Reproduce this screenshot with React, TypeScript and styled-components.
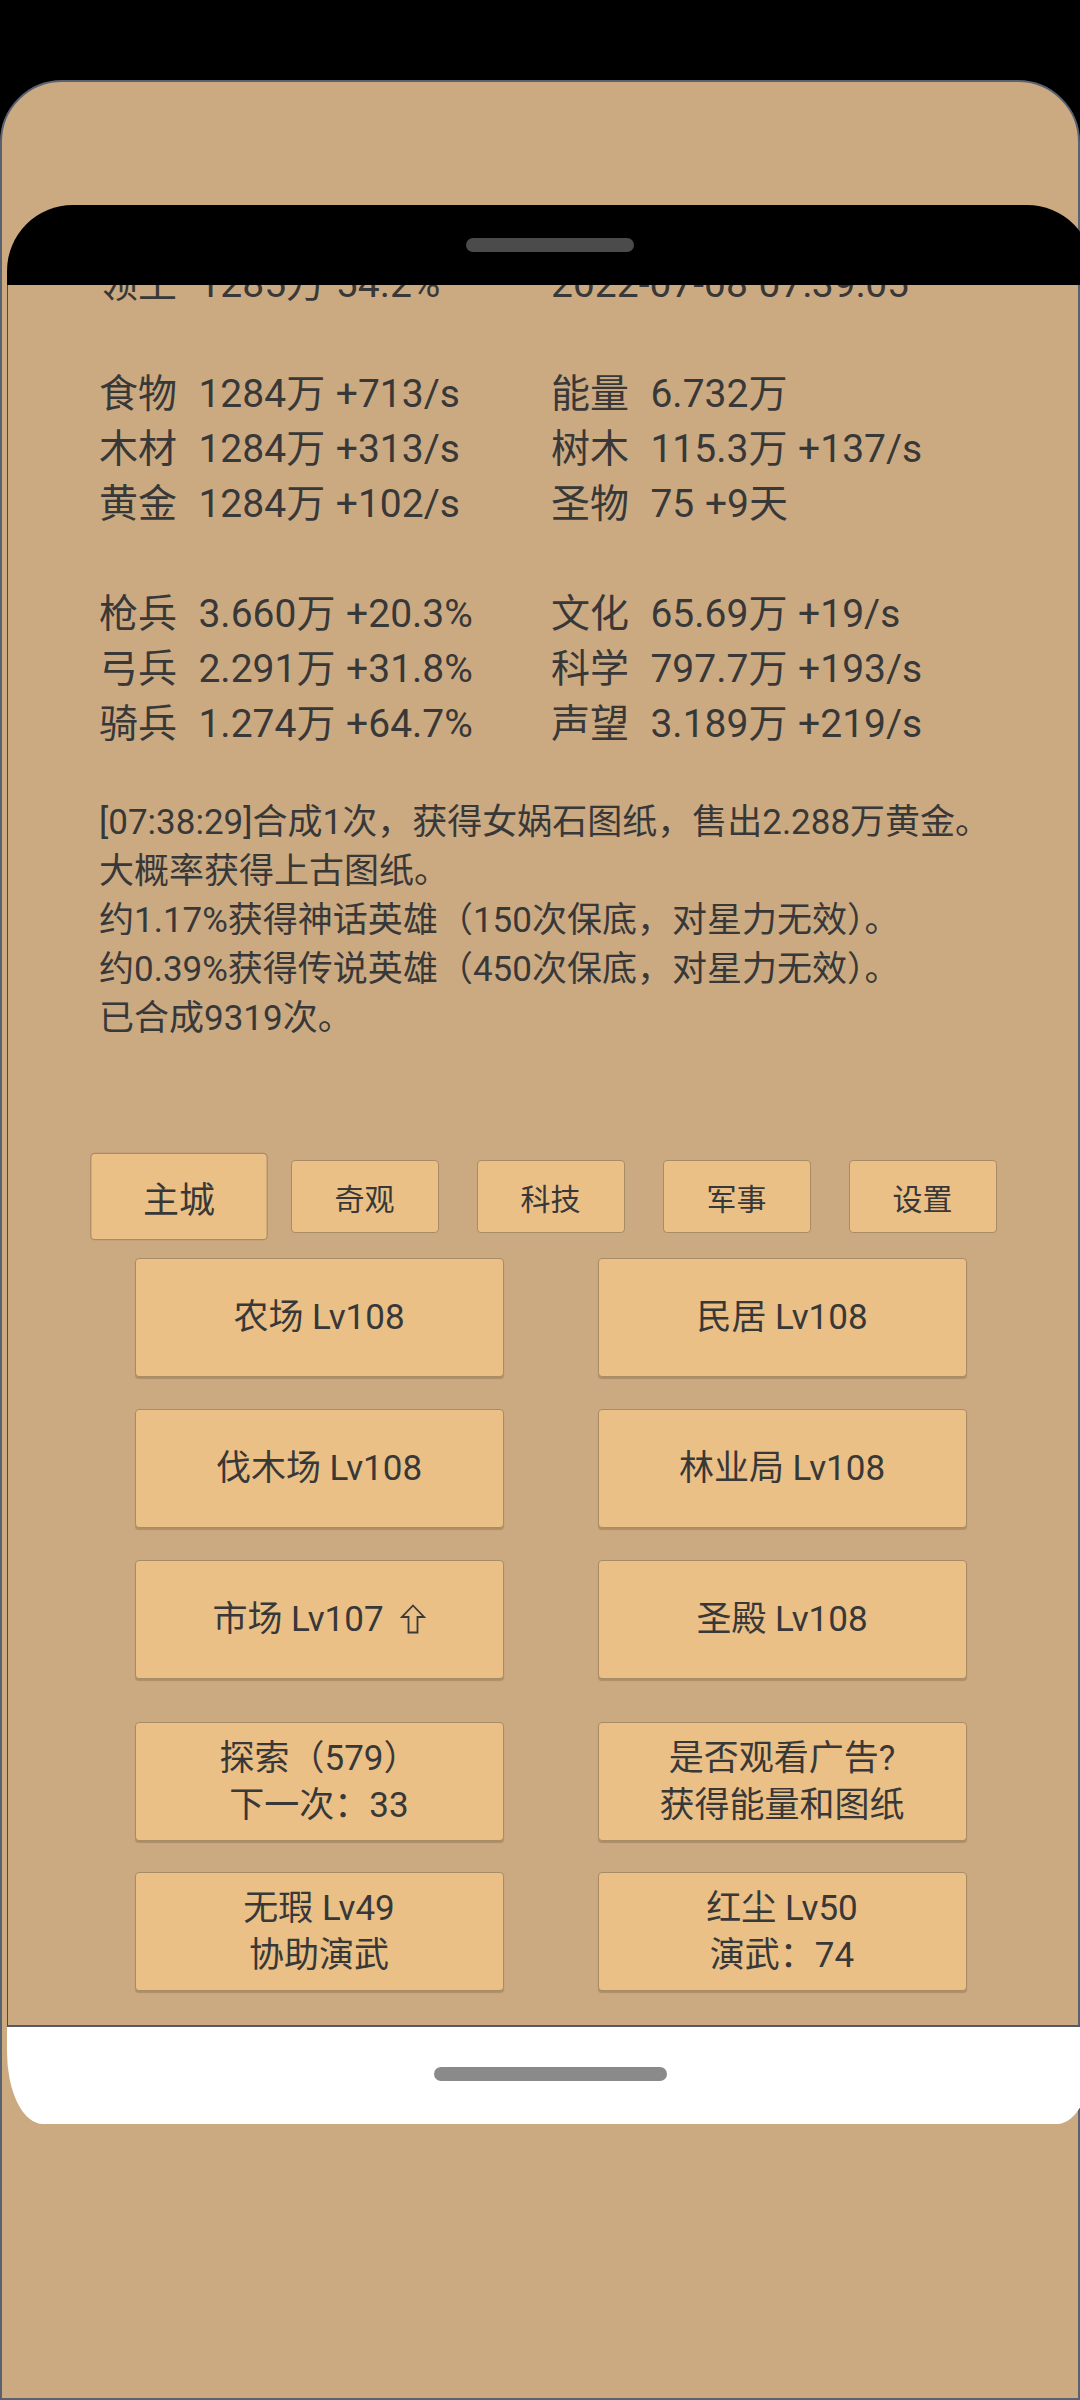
import styled, { createGlobalStyle } from "styled-components";

const GlobalStyle = createGlobalStyle`
  html, body {
    margin: 0;
    padding: 0;
    background: #000;
  }
  #root {
    width: 1080px;
    height: 2400px;
    overflow: hidden;
  }
  * {
    box-sizing: border-box;
  }
`;

const stats: ([string, string, string, string] | null)[] = [
  ["领土", "1285万 54.2%", "", "2022-07-08 07:39:05"],
  null,
  ["食物", "1284万 +713/s", "能量", "6.732万"],
  ["木材", "1284万 +313/s", "树木", "115.3万 +137/s"],
  ["黄金", "1284万 +102/s", "圣物", "75 +9天"],
  null,
  ["枪兵", "3.660万 +20.3%", "文化", "65.69万 +19/s"],
  ["弓兵", "2.291万 +31.8%", "科学", "797.7万 +193/s"],
  ["骑兵", "1.274万 +64.7%", "声望", "3.189万 +219/s"],
];

const log = [
  "[07:38:29]合成1次，获得女娲石图纸，售出2.288万黄金。",
  "大概率获得上古图纸。",
  "约1.17%获得神话英雄（150次保底，对星力无效）。",
  "约0.39%获得传说英雄（450次保底，对星力无效）。",
  "已合成9319次。",
];

const tabs = ["主城", "奇观", "科技", "军事", "设置"];

// outlined "upgrade available" arrow
function UpArrow() {
  return (
    <ArrowIcon width="26" height="30" viewBox="0 0 26 30">
      <path
        d="M13 1.5 L24 13 H17.5 V28.5 H8.5 V13 H2 Z"
        fill="none"
        stroke="#3a3a3a"
        strokeWidth="1.8"
        strokeLinejoin="miter"
      />
    </ArrowIcon>
  );
}

export default function App() {
  return (
    <>
      <GlobalStyle />
      <Device>
        <Phone>
          <Notch>
            <Pill $w={168} $color="#4b4b4b" />
          </Notch>
          <Screen>
            <Scroll>
              <Stats>
                {stats.map((row, i) =>
                  row ? (
                    <Row key={i}>
                      <Cell>
                        <Label>{row[0]}</Label>
                        {row[1]}
                      </Cell>
                      <Cell>
                        {row[2] && <Label>{row[2]}</Label>}
                        {row[3]}
                      </Cell>
                    </Row>
                  ) : (
                    <Blank key={i} />
                  )
                )}
              </Stats>
              <Log>
                {log.map((line) => (
                  <div key={line}>{line}</div>
                ))}
              </Log>
              <Tabs>
                {tabs.map((t, i) => (
                  <Tab key={t} $active={i === 0}>
                    {t}
                  </Tab>
                ))}
              </Tabs>
              <Grid $top={25} $gap={32}>
                <Button>农场 Lv108</Button>
                <Button>民居 Lv108</Button>
                <Button>伐木场 Lv108</Button>
                <Button>林业局 Lv108</Button>
                <Button>
                  <Line>
                    市场 Lv107
                    <UpArrow />
                  </Line>
                </Button>
                <Button>圣殿 Lv108</Button>
              </Grid>
              <Grid $top={43} $gap={31}>
                <Button>
                  <Line>探索（579）</Line>
                  <Line>下一次：33</Line>
                </Button>
                <Button>
                  <Line>是否观看广告?</Line>
                  <Line>获得能量和图纸</Line>
                </Button>
                <Button>
                  <Line>无瑕 Lv49</Line>
                  <Line>协助演武</Line>
                </Button>
                <Button>
                  <Line>红尘 Lv50</Line>
                  <Line>演武：74</Line>
                </Button>
              </Grid>
            </Scroll>
          </Screen>
          <HomeBar>
            <Pill $w={233} $color="#8a8a8a" />
          </HomeBar>
        </Phone>
      </Device>
    </>
  );
}

const Device = styled.div`
  margin-top: 80px;
  height: 2320px;
  background: #cbaa82;
  border: 2px solid #5a6272;
  border-radius: 62px 62px 0 0;
  padding-top: 123px;
  padding-left: 5px;
`;

const Phone = styled.div`
  width: 1086px;
  display: flex;
  flex-direction: column;
`;

const Notch = styled.div`
  height: 80px;
  background: #000;
  border-radius: 66px 66px 0 0;
  display: flex;
  justify-content: center;
  padding-top: 33px;
`;

const Pill = styled.div<{ $w: number; $color: string }>`
  width: ${(p) => p.$w}px;
  height: 14px;
  border-radius: 7px;
  background: ${(p) => p.$color};
`;

const Screen = styled.div`
  height: 1742px;
  border-left: 1px solid #4a4a4a;
  border-bottom: 2px solid #525a6a;
  overflow: hidden;
  padding: 0 91px;
  color: #383838;
  font-family: Roboto, "Noto Sans CJK SC", sans-serif;
`;

const Scroll = styled.div`
  margin-top: -28px;
`;

const Stats = styled.div`
  font-size: 39px;
  line-height: 55px;
`;

const Row = styled.div`
  display: grid;
  grid-template-columns: 452px 1fr;
  height: 55px;
`;

const Blank = styled.div`
  height: 55px;
`;

const Cell = styled.div`
  white-space: nowrap;
  word-spacing: 1px;
`;

const Label = styled.span`
  margin-right: 0.55em;
`;

const Log = styled.div`
  margin-top: 46px;
  font-size: 35px;
  line-height: 49px;
  white-space: nowrap;
`;

const Tabs = styled.div`
  margin-top: 117px;
  display: flex;
  justify-content: center;
  gap: 38px;
`;

const Tab = styled.div<{ $active?: boolean }>`
  width: 148px;
  height: 73px;
  display: flex;
  align-items: center;
  justify-content: center;
  background: #eac086;
  border: 1.5px solid #a88c66;
  border-radius: 4px;
  font-size: 30px;
  transform: ${(p) => (p.$active ? "scale(1.2)" : "none")};
`;

const Grid = styled.div<{ $top: number; $gap: number }>`
  margin-top: ${(p) => p.$top}px;
  display: grid;
  grid-template-columns: 369px 369px;
  column-gap: 94px;
  row-gap: ${(p) => p.$gap}px;
  justify-content: center;
`;

const Button = styled.div`
  height: 119px;
  display: flex;
  flex-direction: column;
  align-items: center;
  justify-content: center;
  background: #eac086;
  border: 1.5px solid #a88c66;
  border-radius: 4px;
  box-shadow: 0 2px 1px rgba(90, 60, 20, 0.25);
  font-size: 35px;
  line-height: 47px;
  text-align: center;
  white-space: nowrap;
`;

const Line = styled.span`
  display: flex;
  align-items: center;
  gap: 16px;
`;

const ArrowIcon = styled.svg`
  display: block;
  margin-top: -2px;
`;

const HomeBar = styled.div`
  height: 97px;
  background: #fff;
  border-radius: 0 0 36px 36px / 0 0 72px 72px;
  display: flex;
  justify-content: center;
  padding-top: 40px;
`;
